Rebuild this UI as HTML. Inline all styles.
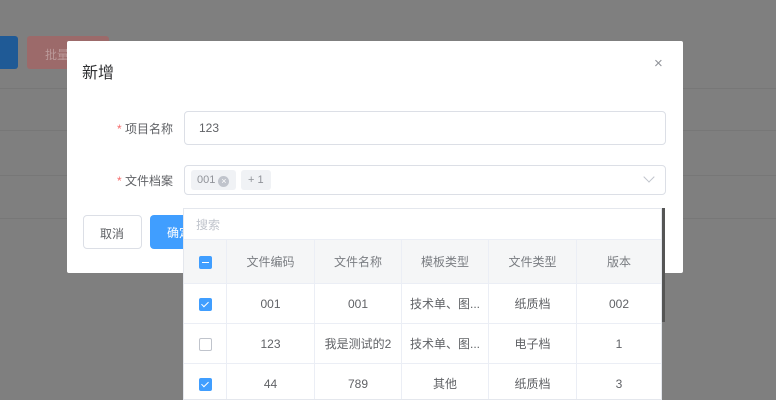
<!DOCTYPE html>
<html><head><meta charset="utf-8"><style>
*{box-sizing:border-box;margin:0;padding:0}
body{width:776px;height:400px;overflow:hidden;background:#7f7f7f;font-family:"Liberation Sans","Noto Sans CJK SC",sans-serif;position:relative;font-size:12px;color:#606266}
.abs{position:absolute}
.line{position:absolute;left:0;width:776px;height:1px;background:#777}
.modal{left:67px;top:41px;width:616px;height:232px;background:#fff;border-radius:2px}
.inp{position:absolute;border:1px solid #dcdfe6;border-radius:4px;background:#fff}
.lbl{position:absolute;font-size:12px;color:#606266}
.lbl b{color:#f56c6c;font-weight:normal}
.dd{left:183px;top:208px;width:479px;height:192px;background:#fff;border:1px solid #e4e7ed;overflow:hidden}
table{border-collapse:collapse;position:absolute;left:-1px;top:30px;width:479px;table-layout:fixed}
td{border:1px solid #ebeef5;text-align:center;font-size:12px;color:#606266;height:40px;padding:0;line-height:38px}
tr.h td{background:#f5f6f7;height:44px;line-height:42px;color:#7a7d82}
.cb{display:inline-block;width:13px;height:13px;border:1px solid #c0c4cc;border-radius:2px;vertical-align:middle;position:relative}
.cb.on{background:#409eff;border-color:#409eff}
.cb.on:after{content:"";position:absolute;left:3.5px;top:1px;width:3px;height:6px;border:solid #fff;border-width:0 1.5px 1.5px 0;transform:rotate(45deg)}
.cb.ind{background:#409eff;border-color:#409eff}
.cb.ind:after{content:"";position:absolute;left:2px;top:5px;width:7px;height:1.5px;background:#fff}
.tag{position:absolute;top:4px;height:20px;background:#f0f2f5;border-radius:3px;color:#909399;font-size:11px;line-height:20px;white-space:nowrap}
</style></head><body>
<div class="line" style="top:88px"></div>
<div class="line" style="top:130px"></div>
<div class="line" style="top:175px"></div>
<div class="line" style="top:218px"></div>
<div class="abs" style="left:-4px;top:36px;width:22px;height:33px;background:#1f5a96;border-radius:3px"></div>
<div class="abs" style="left:27px;top:36px;width:82px;height:33px;background:#9c6a6a;border-radius:3px;color:#b99;padding:10px 18px">批量</div>
<div class="abs modal">
<div class="abs" style="left:15px;top:18px;font-size:16px;color:#303133">新增</div>
<div class="abs" style="left:587px;top:14px;font-size:15px;color:#909399">×</div>
<div class="lbl" style="left:50px;top:79px"><b>* </b>项目名称</div>
<div class="inp" style="left:117px;top:70px;width:482px;height:34px;padding:9px 14px;color:#606266">123</div>
<div class="lbl" style="left:50px;top:131px"><b>* </b>文件档案</div>
<div class="inp" style="left:117px;top:124px;width:482px;height:30px">
<span class="tag" style="left:6px;width:45px;padding-left:6px">001 <span style="display:inline-block;width:11px;height:11px;border-radius:50%;background:#c0c4cc;color:#fff;font-size:9px;line-height:11px;text-align:center;vertical-align:-1px">×</span></span>
<span class="tag" style="left:56px;width:30px;padding-left:7px">+ 1</span>
<span class="abs" style="right:12px;top:7px;width:8px;height:8px;border:solid #c0c4cc;border-width:0 1px 1px 0;transform:rotate(45deg)"></span>
</div>
<div class="inp" style="left:16px;top:174px;width:59px;height:34px;padding:9px 16px;color:#606266">取消</div>
<div class="abs" style="left:83px;top:174px;width:50px;height:34px;background:#409eff;border-radius:4px;color:#fff;padding:9px 17px;white-space:nowrap;overflow:hidden">确定</div>
</div>
<div class="abs dd">
<div class="abs" style="left:12px;top:7px;color:#c0c4cc">搜索</div>
<table>
<tr class="h"><td style="width:43px"><span class="cb ind"></span></td><td style="width:88px">文件编码</td><td style="width:87px">文件名称</td><td style="width:87px">模板类型</td><td style="width:88px">文件类型</td><td>版本</td></tr>
<tr><td><span class="cb on"></span></td><td>001</td><td>001</td><td>技术单、图...</td><td>纸质档</td><td>002</td></tr>
<tr><td><span class="cb"></span></td><td>123</td><td>我是测试的2</td><td>技术单、图...</td><td>电子档</td><td>1</td></tr>
<tr><td><span class="cb on"></span></td><td>44</td><td>789</td><td>其他</td><td>纸质档</td><td>3</td></tr>
</table>
</div>
<div class="abs" style="left:662px;top:208px;width:3px;height:114px;background:#555"></div>
</body></html>
